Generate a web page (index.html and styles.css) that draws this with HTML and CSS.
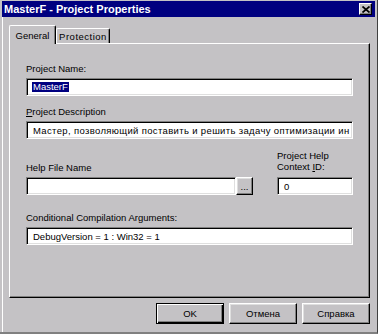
FILE: index.html
```html
<!DOCTYPE html>
<html>
<head>
<meta charset="utf-8">
<title>MasterF - Project Properties</title>
<link rel="stylesheet" href="styles.css">
</head>
<body>
<div class="window">
  <div class="titlebar">
    <span class="title">MasterF - Project Properties</span>
    <span class="close"><svg width="8" height="7" viewBox="0 0 8 7"><path d="M0.5 0.5L7.5 6.5M7.5 0.5L0.5 6.5" stroke="#000" stroke-width="1.7" fill="none"/></svg></span>
  </div>
  <div class="main">
    <div class="tabs">
      <div class="tab active">General</div>
      <div class="tab wide">Protection</div>
    </div>
    <div class="panel">
      <div class="label">Project Name:</div>
      <div class="input"><span class="sel">MasterF</span></div>
      <div class="label gap"><u>P</u>roject Description</div>
      <div class="input spaced">Мастер, позволяющий поставить и решить задачу оптимизации ин</div>
      <div class="row3">
        <div class="col">
          <div class="label">Help File Name</div>
          <div class="group">
            <div class="input file"></div>
            <div class="btn dots">...</div>
          </div>
        </div>
        <div class="col">
          <div class="label two">Project Help<br>Context <u>I</u>D:</div>
          <div class="input">0</div>
        </div>
      </div>
      <div class="label gap4">Conditional Compilation Arguments:</div>
      <div class="input">DebugVersion = 1 : Win32 = 1</div>
    </div>
    <div class="buttons">
      <div class="btn push default">OK</div>
      <div class="btn push">Отмена</div>
      <div class="btn push">Справка</div>
    </div>
  </div>
</div>
</body>
</html>
```

FILE: styles.css
```css
* { box-sizing: border-box; }
html, body { margin: 0; padding: 0; }
body {
  width: 378px;
  height: 334px;
  overflow: hidden;
  background: #c4c2c5;
  font-family: "Liberation Sans", Arial, sans-serif;
  font-size: 9.5px;
  color: #000;
}
.window {
  width: 378px;
  height: 334px;
  padding: 1px 2px 0 2px;
  border-right: 1px solid #404040;
  border-bottom: 2px solid #808080;
  display: flex;
  flex-direction: column;
}
.titlebar {
  height: 16px;
  flex-shrink: 0;
  background: #000080;
  display: flex;
  align-items: center;
  justify-content: space-between;
  padding: 0 3px 0 2px;
}
.title {
  color: #fff;
  font-weight: bold;
  font-size: 11px;
  white-space: nowrap;
}
.close {
  width: 13px;
  height: 12px;
  background: #c4c2c5;
  border-top: 1px solid #fff;
  border-left: 1px solid #fff;
  border-right: 1px solid #000;
  border-bottom: 1px solid #000;
  box-shadow: inset -1px -1px #808080;
  display: flex;
  align-items: center;
  justify-content: center;
}
.main {
  flex: 1;
  border-left: 1px solid #fff;
  padding: 8px 0 0 6px;
}
.tabs {
  display: flex;
  align-items: flex-end;
  height: 18px;
  position: relative;
  z-index: 1;
}
.tab {
  width: 54px;
  height: 15px;
  border-top: 1px solid #fff;
  border-left: 1px solid #fff;
  border-right: 1px solid #000;
  box-shadow: inset -1px 0 #808080;
  border-radius: 2px 2px 0 0;
  display: flex;
  align-items: center;
  justify-content: center;
  white-space: nowrap;
}
.tab.wide {
  letter-spacing: 0.5px;
}
.tab.active {
  width: 47px;
  height: 19px;
  margin-bottom: -1px;
  background: #c4c2c5;
}
.panel {
  width: 361px;
  height: 255px;
  border: 1px solid;
  border-color: #fff #000 #000 #fff;
  box-shadow: inset -1px -1px #808080;
  padding: 19px 16px 0 16px;
  display: flex;
  flex-direction: column;
}
.label {
  line-height: 12px;
  margin-bottom: 3px;
  white-space: nowrap;
}
.label.gap { margin-top: 10px; }
.label.gap4 { margin-top: 17px; }
.label.two {
  line-height: 11px;
  margin-bottom: 5px;
}
.input {
  height: 18px;
  background: #fff;
  border: 1px solid;
  border-color: #808080 #fff #fff #808080;
  box-shadow: inset 1px 1px #000, inset -1px -1px #dfdfdf;
  padding: 0 4px 0 6px;
  display: flex;
  align-items: center;
  overflow: hidden;
  white-space: nowrap;
}
.input.spaced {
  letter-spacing: 0.35px;
}
.sel {
  background: #000080;
  color: #fff;
  line-height: 10px;
  padding: 0 1px;
  margin-left: -1px;
}
.row3 {
  margin-top: 11px;
  display: grid;
  grid-template-columns: 227px 76px;
  column-gap: 24px;
  align-items: end;
}
.col {
  display: flex;
  flex-direction: column;
}
.group {
  display: flex;
}
.input.file {
  width: 210px;
}
.btn {
  background: #c4c2c5;
  border: 1px solid;
  border-color: #fff #000 #000 #fff;
  box-shadow: inset -1px -1px #808080, inset 1px 1px #dfdfdf;
  display: flex;
  align-items: center;
  justify-content: center;
  white-space: nowrap;
}
.btn.dots {
  width: 17px;
  height: 18px;
  align-items: flex-end;
  padding-bottom: 3px;
  line-height: 9px;
}
.buttons {
  width: 361px;
  margin-top: 5px;
  display: flex;
  justify-content: flex-end;
  gap: 5px;
}
.btn.push {
  width: 68px;
  height: 21px;
}
.btn.default {
  border-color: #000;
  box-shadow: inset 1px 1px #fff, inset -1px -1px #000, inset -2px -2px #808080;
}
```
